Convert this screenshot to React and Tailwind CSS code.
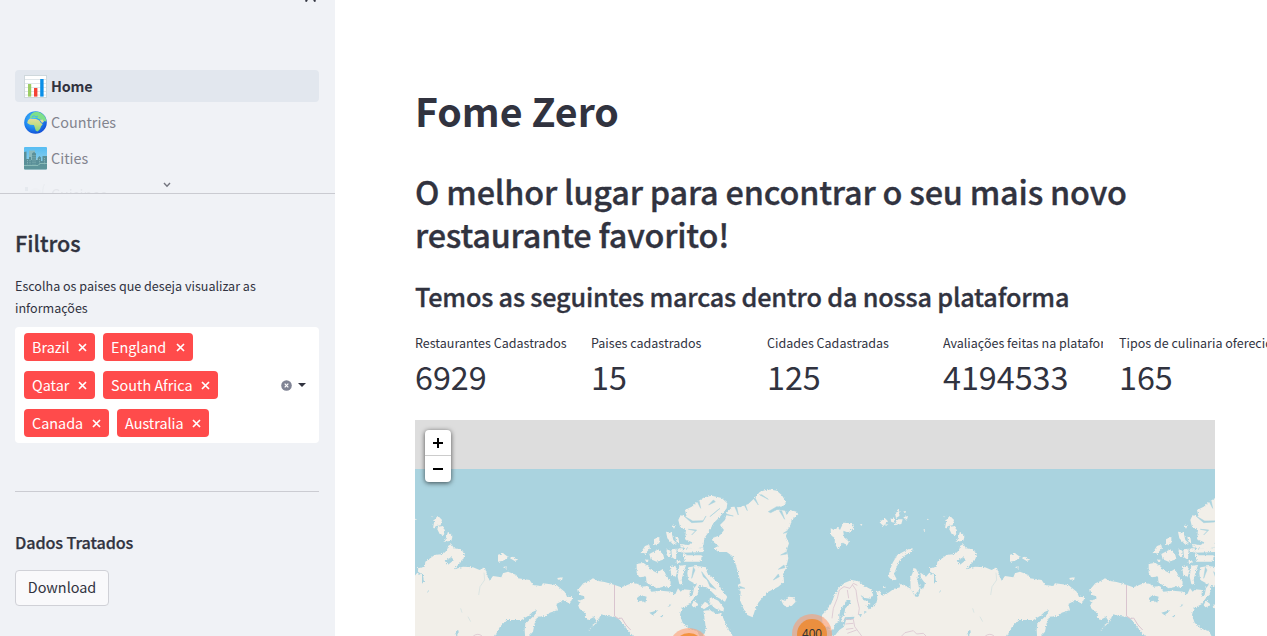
import React from "react";

const LAND = "#f2efe9";
const SEA = "#aad3df";

function ChartIcon() {
  return (
    <svg className="h-[23px] w-[23px] shrink-0" viewBox="0 0 23 23">
      <rect x="0.5" y="0.5" width="22" height="22" fill="#fff" stroke="#cfd8dc" />
      <path d="M1 4.5H22M1 8.5H22M1 12.5H22M1 16.5H22M1 20H22" stroke="#dde4e8" strokeWidth="0.9" />
      <rect x="4" y="9" width="3.2" height="12.6" fill="#9ccc65" />
      <rect x="10" y="13" width="3.4" height="8.6" fill="#f44336" />
      <rect x="16.2" y="4" width="3.4" height="17.6" fill="#0a8fe8" />
    </svg>
  );
}

function GlobeIcon() {
  return (
    <svg className="h-[23px] w-[23px] shrink-0" viewBox="0 0 23 23">
      <defs>
        <radialGradient id="ocean" cx="0.4" cy="0.35" r="0.65">
          <stop offset="0" stopColor="#4fc3f7" />
          <stop offset="0.6" stopColor="#1e88f0" />
          <stop offset="1" stopColor="#1554d8" />
        </radialGradient>
        <linearGradient id="africa" x1="0" y1="0" x2="0" y2="1">
          <stop offset="0" stopColor="#e3dc9a" />
          <stop offset="0.45" stopColor="#c5dd87" />
          <stop offset="1" stopColor="#7fd77a" />
        </linearGradient>
      </defs>
      <circle cx="11.5" cy="11.5" r="11.3" fill="url(#ocean)" />
      <path d="M6 5.5Q7 2 11.5 0.7Q17 0.5 20.5 5Q22.6 8 22.3 10.5L19.5 10L17 8.3L14.5 8L13 6.4L10.5 7L8.5 6.6L6.3 7.6Z" fill="#7ee08a" />
      <path d="M4 9.2L6 7.5L9 8L12 8L15.3 9.5L17 12L18.7 13L17 15.5L16 18L13.7 20.5L11.8 19.8L10.8 16.5L10 14L6 13.7L3.2 12Z" fill="url(#africa)" />
      <path d="M15.5 8.5L18.5 8.6L20 10.8L18 12Z" fill="#dfdf9a" />
      <path d="M8 5.8L10 4.7L12 5.8L14 5.2" stroke="#42b4ee" strokeWidth="0.9" fill="none" />
    </svg>
  );
}

function CityIcon() {
  return (
    <svg className="h-[23px] w-[23px] shrink-0" viewBox="0 0 23 23">
      <defs>
        <linearGradient id="sky" x1="0" y1="0" x2="0" y2="1">
          <stop offset="0" stopColor="#56bdf3" />
          <stop offset="1" stopColor="#a8d7e5" />
        </linearGradient>
      </defs>
      <rect width="23" height="22.5" rx="1" fill="url(#sky)" />
      <path d="M5 3.500H11V20H5ZM13 11H16V20H13Z" fill="#8bb9bd" />
      <path d="M0 5L2.5 4.500V12H5V10H7V13H8V6.500L10 5L12 6.500V13H14V10.5L15.5 9L17 10.5V14H18.5V9H23V20H0Z" fill="#5a8f98" />
      <path d="M9 8V18M11 8V18M3.5 13V18M15.5 12V18M20.5 11V18M6 13V18" stroke="#93bfc0" strokeWidth="0.8" strokeDasharray="1.2 1" />
      <path d="M0 17.5H23V21.5Q23 22.5 22 22.5H1Q0 22.5 0 21.5Z" fill="#5d949a" />
      <path d="M0 18.5H14L16 16.5H23" stroke="#8fc0bb" strokeWidth="0.9" fill="none" />
    </svg>
  );
}

function CutleryIcon() {
  return (
    <svg className="h-[23px] w-[23px] shrink-0" viewBox="0 0 23 23">
      <circle cx="11.500" cy="12" r="7" fill="#dfe3e8" />
      <path d="M1 4H4V8H1Z" fill="#90a4ae" />
      <path d="M20.5 1Q18 5 19 12H20.5V22" stroke="#b5c0c6" strokeWidth="1.2" fill="none" />
    </svg>
  );
}

function NavItem({ icon, label, active }) {
  return (
    <div
      className={
        active
          ? "mb-1 flex h-8 shrink-0 items-center gap-1 rounded bg-[#e2e7ee] pl-[9px] font-bold tracking-[-0.15px] text-[#31333f]"
          : "mb-1 flex h-8 shrink-0 items-center gap-1 rounded pl-[9px] text-[#82848e]"
      }
    >
      {icon}
      <span className="text-[14.4px] leading-8">{label}</span>
    </div>
  );
}

function Tag({ label, width }) {
  return (
    <span
      className="flex h-7 items-center justify-between rounded bg-[#ff4b4b] pr-2 pl-2 text-[14.4px] leading-7 whitespace-nowrap text-white"
      style={{ width }}
    >
      {label}
      <svg className="h-[9px] w-[9px]" viewBox="0 0 9 9">
        <path d="M1 1L8 8M8 1L1 8" stroke="#fff" strokeWidth="1.7" />
      </svg>
    </span>
  );
}

function Metric({ label, value }) {
  return (
    <div className="w-40 shrink-0">
      <div className="overflow-hidden text-[12.53px] leading-[22px] whitespace-nowrap">{label}</div>
      <div className="-mt-[2px] text-[32.3px] leading-[48px]">{value}</div>
    </div>
  );
}

/* One copy of the world, 512 units wide on screen; repeated sideways. */
function World() {
  return (
    <g id="world">
      {/* North America and Greenland */}
      <g transform="translate(195 60) scale(0.33333)" fill={LAND}>
        <g filter="url(#coast)">
          <path d="M-87 468L-66 452L-50 435L-41 422L-48 411L-66 420L-76 412L-72 400L-91 387L-97 372L-88 368L-98 362L-76 357L-78 348L-92 345L-95 328L-80 310L-62 302L-51 295L-36 303L-16 306L14 315L34 322L44 318L69 308L84 312L94 320L114 318L124 335L154 332L184 335L195 345L204 325L212 335L220 328L240 330L238 350L248 345L252 325L262 312L268 325L262 345L250 356L240 372L215 385L210 405L218 428L235 445L260 452L275 480L80 480L62 460L45 440L34 425L24 415L14 410L-10 408L-26 403L-42 430L-60 448Z" />
          <path d="M270 480L288 450L285 425L280 392L300 391L320 402L332 400L340 415L350 440L376 480Z" />
          <path d="M392 310L385 280L376 250L367 228L350 216L325 216L312 205L325 198L308 184L306 175L330 166L342 150L330 135L345 120L350 98L368 80L390 82L415 72L430 58L450 35L475 28L500 32L515 45L528 65L520 78L495 88L525 92L530 105L540 90L560 95L565 103L545 120L540 140L532 150L528 170L537 190L530 210L535 235L528 265L520 280L522 305L505 320L475 335L460 350L445 368L435 390L428 412L412 405L400 385L390 360L392 335L383 315Z" />
          <path d="M283 52L305 47L335 54L352 70L350 85L330 110L310 130L300 150L283 175L280 200L250 208L232 205L235 195L250 188L225 178L228 150L210 140L205 120L212 105L230 110L225 90L245 80L262 65Z" />
          <path d="M80 252L100 248L118 262L120 272L102 290L88 292L80 278Z" />
          <path d="M120 268L140 278L160 266L168 285L182 305L180 322L155 322L140 325L110 308L108 290L98 286Z" />
          <path d="M180 262L196 257L202 275L196 292L184 285ZM208 257L228 255L220 280L215 300L218 315L208 312L203 290Z" />
          <path d="M235 262L260 258L288 262L292 280L305 290L325 310L335 330L352 350L345 365L320 350L305 335L290 322L268 318L250 308L235 300L232 280Z" />
          <path d="M272 380L285 365L300 375L282 388ZM300 350L325 362L342 385L340 395L315 385L298 368ZM245 375L252 362L268 375L250 382Z" />
          <path d="M92 218L105 198L118 195L120 205L105 222ZM118 222L145 208L160 225L163 238L140 245L122 238ZM132 178L148 170L148 190L132 195ZM168 155L185 158L190 180L200 190L188 192L172 175ZM196 170L205 172L208 190L200 188ZM186 136L195 140L192 146ZM170 208L182 212L180 232L170 226ZM184 208L200 206L198 240L186 232ZM203 205L218 205L216 216L204 216ZM210 192L240 196L238 206L212 202ZM220 218L232 226L275 226L273 245L225 245ZM215 208L280 202L280 216L218 218ZM105 238L118 240L110 248ZM200 240L214 244L210 250L200 248Z" />
          <path d="M512 358L525 362L535 350L552 352L557 365L545 378L530 382L520 374Z" />
        </g>
        <path d="M80 355L92 345L110 350L106 368L96 362L84 364ZM118 398L145 390L128 406ZM150 410L160 404L156 412ZM172 380L184 372L180 379Z" fill={SEA} filter="url(#coast)" />
        <path d="M222 108L245 128L278 126L288 108L280 122L248 123ZM262 65L272 85L268 64ZM310 60L296 75L316 65ZM235 148L260 150L245 165L257 152ZM300 110L330 85L305 105ZM340 100L370 108L345 104ZM375 82L385 105L380 80ZM400 70L412 92L405 70ZM430 55L445 75L436 55ZM450 45L475 58L455 44ZM475 95L500 80L528 82L505 86L482 98ZM508 92L524 118L515 92ZM535 150L520 160L538 156ZM530 215L512 225L530 222ZM522 255L505 268L525 263ZM505 282L490 300L508 290ZM388 318L405 325L390 325ZM250 262L245 295L255 270ZM275 275L298 305L280 290ZM292 300L318 328L300 320ZM160 320L180 330L150 328Z" fill={SEA} stroke={SEA} strokeWidth="1.6" />
        <path d="M13.500 315V408L25 416L35 414L48 435L62 450" fill="none" stroke="#d9c4cf" strokeWidth="3" />
      </g>

      {/* Eurasia and the Arctic islands */}
      <g transform="translate(385 60) scale(0.33333)" fill={LAND}>
        <g filter="url(#coast)">
          <path d="M90 480L88 440L68 438L66 405L82 388L94 370L104 345L115 325L135 308L155 300L175 304L188 314L212 328L220 345L212 356L195 354L182 345L190 360L200 362L212 372L198 378L210 388L228 372L232 358L230 335L240 332L244 348L265 338L280 328L300 322L298 310L315 318L330 325L348 352L358 342L362 325L355 310L360 330L372 322L375 310L362 292L362 278L378 290L388 278L402 288L402 312L395 318L408 305L405 285L390 275L390 265L410 260L412 245L440 225L465 222L478 210L480 198L490 192L498 205L520 208L530 225L525 240L510 255L500 268L525 260L555 262L575 270L590 262L598 285L605 302L615 288L640 292L645 280L660 275L685 285L690 295L725 300L735 315L760 318L765 310L805 315L830 335L837 350L855 352L845 372L828 360L805 372L810 390L785 398L775 408L748 410L740 430L735 455L712 480L710 450L712 432L740 405L747 390L735 395L720 408L700 420L655 420L635 442L615 480Z" />
          <path d="M332 330L331 295L338 278L340 264L348 266L355 280L352 300L358 328L350 345Z" />
          <path d="M328 206L338 205L336 214L312 228L298 242L290 262L282 282L290 298L280 303L265 290L270 270L278 248L292 225L310 215Z" />
          <path d="M92 145L102 150L112 140L120 150L130 128L155 130L160 145L145 158L130 152L132 172L147 185L142 195L128 188L122 195L115 210L104 190L105 175L93 165ZM180 133L187 132L184 138Z" />
          <path d="M238 126L255 115L264 124L250 138ZM272 118L282 112L284 128L274 126ZM285 100L298 92L298 108L288 114ZM292 118L308 118L304 132L284 136ZM310 112L324 108L320 122ZM310 94L318 94L314 98ZM255 134L265 132L258 138ZM292 90L298 90L296 94Z" />
          <path d="M440 118L450 107L462 120L458 136L445 138L435 145ZM450 140L465 138L471 152L467 166L455 162L448 148ZM480 155L494 168L490 182L470 185ZM380 117L387 118L383 121ZM430 108L436 110L432 112ZM370 148L376 151L372 153Z" />
          <path d="M630 224L645 220L662 232L645 242L630 245ZM665 234L675 230L688 240L680 243ZM645 262L655 258L656 266Z" />
          <path d="M808 294L822 292L824 298L810 299ZM250 322L255 318L257 325Z" />
        </g>
        <g fill={SEA} filter="url(#coast)">
          <path d="M133 372L140 360L152 360L150 372L136 385L132 405L124 415L128 428L135 412L164 410L160 418L138 420L132 440L118 450L106 465L90 468L84 455L102 448L104 432L118 425L118 405L122 388Z" />
          <path d="M176 403L186 402L182 412ZM192 392L200 395L196 402ZM470 242L490 232L498 240L480 254ZM498 468L510 448L512 455L506 468ZM418 335L422 332L420 340ZM348 340L360 328L356 350Z" />
        </g>
        <g fill="none" stroke="#d9c4cf" strokeWidth="2.4">
          <path d="M96 415L100 385L112 355L118 330L132 320L150 325L160 310L172 316M146 355L142 330M158 315L168 330L172 360L178 385L175 405M135 418L160 418L164 440L185 468M136 432L160 430M138 448L160 445M142 460L170 450M305 468L315 458L340 452L350 462L370 460L378 468M556 468Q570 458 582 468" />
        </g>
        <path d="M588 278L590 300L576 320L572 345M518 385L522 398M540 410L548 425" fill="none" stroke="#cfdfe0" strokeWidth="2" />
      </g>
    </g>
  );
}

function WorldMap() {
  return (
    <div className="relative h-[216px] w-[800px] shrink-0 overflow-hidden bg-[#ddd]">
      <svg className="block h-[216px] w-[800px]" viewBox="0 0 800 216">
        <defs>
          <filter id="coast" x="-5%" y="-5%" width="110%" height="110%">
            <feTurbulence type="fractalNoise" baseFrequency="0.22" numOctaves="2" seed="4" result="n" />
            <feDisplacementMap in="SourceGraphic" in2="n" scale="9" xChannelSelector="R" yChannelSelector="G" />
          </filter>
        </defs>
        <rect y="49" width="800" height="170" fill={SEA} />
        <World />
        <use href="#world" x="-512" />
        <use href="#world" x="512" />
        <g>
          <circle cx="397" cy="214" r="20" fill="#fd9c73" fillOpacity="0.6" />
          <circle cx="397" cy="214" r="15" fill="#f18017" fillOpacity="0.7" />
          <circle cx="274" cy="228" r="20" fill="#fd9c73" fillOpacity="0.6" />
          <circle cx="274" cy="228" r="15" fill="#f18017" fillOpacity="0.7" />
          <text x="397" y="217.500" textAnchor="middle" fontSize="12" fill="#333" fontFamily="Liberation Sans, sans-serif">400</text>
        </g>
      </svg>
      <div className="absolute top-[10px] left-[10px] w-[26px] overflow-visible rounded bg-white shadow-[0_1px_5px_rgba(0,0,0,0.65)]">
        <div className="flex h-[26px] items-center justify-center border-b border-[#ccc]">
          <svg className="h-[10px] w-[10px]" viewBox="0 0 10 10">
            <path d="M5 0V10M0 5H10" stroke="#000" strokeWidth="2" />
          </svg>
        </div>
        <div className="flex h-[26px] items-center justify-center">
          <svg className="h-[10px] w-[10px]" viewBox="0 0 10 10">
            <path d="M0 5H10" stroke="#000" strokeWidth="2" />
          </svg>
        </div>
      </div>
    </div>
  );
}

export default function App() {
  return (
    <div className="flex h-[636px] w-[1267px] overflow-hidden bg-white font-['Noto_Sans_CJK_SC','Noto_Sans',sans-serif] text-[#31333f]">
      <aside className="flex w-[335px] shrink-0 flex-col bg-[#f0f2f6]">
        <div className="flex h-[70px] items-start justify-end pr-[18px]">
          <svg className="h-[2px] w-[13px]" viewBox="0 0 13 2">
            <path d="M1.500 1.500L3.200 0M11.500 1.500L9.800 0" stroke="#31333f" strokeWidth="1.800" />
          </svg>
        </div>
        <nav className="relative flex h-[124px] flex-col overflow-hidden border-b border-[#cacbd1] pr-4 pl-[15px]">
          <NavItem icon={<ChartIcon />} label="Home" active />
          <NavItem icon={<GlobeIcon />} label="Countries" />
          <NavItem icon={<CityIcon />} label="Cities" />
          <div className="opacity-10">
            <NavItem icon={<CutleryIcon />} label="Cuisines" />
          </div>
          <svg className="absolute top-[112px] left-[163px] h-[6px] w-[8px]" viewBox="0 0 8 6">
            <path d="M1 1L4 4.200L7 1" fill="none" stroke="#73757f" strokeWidth="1.400" />
          </svg>
        </nav>
        <div className="flex flex-col pr-4 pl-[15px]">
          <h2 className="mt-[34px] text-[21.6px] leading-[29px] font-medium [-webkit-text-stroke:0.3px_#31333f]">Filtros</h2>
          <p className="mt-[18px] text-[12.56px] leading-[22px]">
            Escolha os paises que deseja visualizar as informações
          </p>
          <div className="mt-[8px] flex h-[116px] items-center rounded bg-white pr-3 pl-[9px]">
            <div className="flex grow flex-col gap-[10px]">
              <div className="flex gap-2">
                <Tag label="Brazil" width={71} />
                <Tag label="England" width={90} />
              </div>
              <div className="flex gap-2">
                <Tag label="Qatar" width={71} />
                <Tag label="South Africa" width={115} />
              </div>
              <div className="flex gap-2">
                <Tag label="Canada" width={85} />
                <Tag label="Australia" width={92} />
              </div>
            </div>
            <svg className="mr-[6px] h-[11px] w-[11px]" viewBox="0 0 11 11">
              <circle cx="5.500" cy="5.500" r="5.300" fill="#808495" />
              <path d="M3.700 3.700L7.300 7.300M7.300 3.700L3.700 7.300" stroke="#fff" strokeWidth="1.200" />
            </svg>
            <svg className="mr-px h-1 w-2" viewBox="0 0 8 4">
              <path d="M0 0H8L4 4Z" fill="#31333f" />
            </svg>
          </div>
          <hr className="mt-12 border-[#cbccd2]" />
          <h3 className="mt-[38px] text-[16.2px] leading-6 font-medium tracking-[-0.1px] [-webkit-text-stroke:0.25px_#31333f]">Dados Tratados</h3>
          <button className="mt-[16px] flex h-9 w-[94px] items-start justify-center rounded border border-[#d0d1d7] bg-[#f9f9fb] text-[14.4px] leading-8">
            Download
          </button>
        </div>
      </aside>

      <main className="flex w-[932px] flex-col overflow-hidden pl-20">
        <h1 className="mt-[83px] text-[39.3px] leading-[53px] font-bold">Fome Zero</h1>
        <h2 className="mt-[33px] w-[800px] text-[32.4px] leading-[43px] font-medium tracking-[-0.2px] [-webkit-text-stroke:0.35px_#31333f]">
          O melhor lugar para encontrar o seu mais novo restaurante favorito!
        </h2>
        <h3 className="mt-[24px] text-[25.2px] leading-[34px] font-medium tracking-[-0.17px] [-webkit-text-stroke:0.35px_#31333f]">
          Temos as seguintes marcas dentro da nossa plataforma
        </h3>
        <section className="mt-[19px] flex gap-4">
          <Metric label="Restaurantes Cadastrados" value="6929" />
          <Metric label="Paises cadastrados" value="15" />
          <Metric label="Cidades Cadastradas" value="125" />
          <Metric label="Avaliações feitas na plataforma" value="4194533" />
          <Metric label="Tipos de culinaria oferecidos" value="165" />
        </section>
        <div className="mt-5">
          <WorldMap />
        </div>
      </main>
    </div>
  );
}
